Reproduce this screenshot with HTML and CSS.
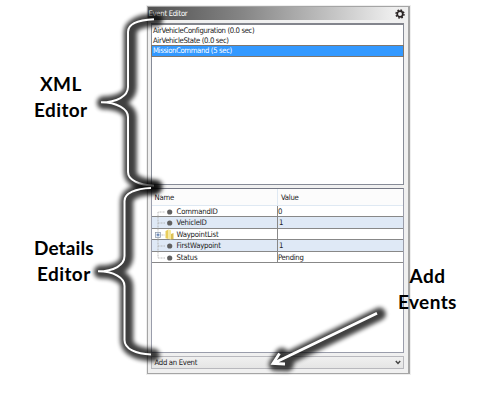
FILE: index.html
```html
<!DOCTYPE html>
<html lang="en">
<head>
<meta charset="utf-8">
<title>Event Editor</title>
<link rel="stylesheet" href="styles.css">
</head>
<body>
<main class="stage">
  <section class="window">
    <header class="titlebar">
      <span>Event Editor</span>
      <svg class="gear" viewBox="0 0 10 10"><circle cx="5" cy="5" r="4" fill="none" stroke="#292323" stroke-width="1.4" stroke-dasharray="1.7 1.44"/><circle cx="5" cy="5" r="2.8" fill="#eee" stroke="#292323" stroke-width="1.7"/></svg>
    </header>
    <ul class="events">
      <li>AirVehicleConfiguration (0.0 sec)</li>
      <li>AirVehicleState (0.0 sec)</li>
      <li class="selected">MissionCommand (5 sec)</li>
    </ul>
    <section class="details">
      <div class="row head"><div class="name">Name</div><div class="value">Value</div></div>
      <div class="row"><div class="name"><svg class="tree" viewBox="0 0 25 11.5"><path class="dots" d="M6 11.5V6H13"/><circle cx="17.7" cy="6" r="2.6"/></svg>CommandID</div><div class="value tight">0</div></div>
      <div class="row alt"><div class="name"><svg class="tree" viewBox="0 0 25 11.5"><path class="dots" d="M6 0V11.5M6 6H13"/><circle cx="17.7" cy="6" r="2.6"/></svg>VehicleID</div><div class="value">1</div></div>
      <div class="row"><div class="name"><svg class="tree" viewBox="0 0 25 11.5"><path class="dots" d="M6 0V11.5M8.5 6H13"/><rect class="box" x="3.5" y="3.4" width="5" height="5"/><path class="plus" d="M4.5 5.9H7.500M6 4.400V7.400"/><path fill="#e9cd5c" d="M13.500 2l3-1.500V10l-3-.8z"/><path fill="#f7e99a" d="M16.500 .5l2.500 .7V10.500L16.500 10z"/><path fill="#dcbf54" d="M19 5l2.500-1V10L19 10.600z"/></svg>WaypointList</div><div class="value"></div></div>
      <div class="row alt"><div class="name"><svg class="tree" viewBox="0 0 25 11.5"><path class="dots" d="M6 0V11.5M6 6H13"/><circle cx="17.7" cy="6" r="2.6"/></svg>FirstWaypoint</div><div class="value">1</div></div>
      <div class="row"><div class="name"><svg class="tree" viewBox="0 0 25 11.5"><path class="dots" d="M6 0V6H13"/><circle cx="17.7" cy="6" r="2.6"/></svg>Status</div><div class="value tight">Pending</div></div>
    </section>
    <div class="combo"><span>Add an Event</span><svg class="chevron" viewBox="0 0 6 5"><path d="M.8 1L3 3.4 5.2 1"/></svg></div>
  </section>
  <svg class="marks" viewBox="0 0 494 402">
    <defs>
      <path id="brace-top" d="M154 19.3C139 20 128 24 128 32V87C128 96 117 102.3 101 102.3C117 102.3 128 109 128 117V172C128 180 139 185 154 185.8"/>
      <path id="brace-bottom" d="M151 188C136 188.5 124.5 193 124.5 201V256C124.5 265 114 271.3 98 271.3C114 271.3 124.5 278 124.5 286V340C124.5 349 136 354 151 354.5"/>
      <path id="arrow" d="M377 313.2L273 363.5M279.5 353.5L273 363.5L285 364"/>
      <filter id="soft" filterUnits="userSpaceOnUse" x="0" y="0" width="494" height="402"><feGaussianBlur stdDeviation="2.2"/></filter>
    </defs>
    <g class="glow" filter="url(#soft)"><use href="#brace-top" x="2.300" y="0.500"/></g><use href="#brace-top" class="stroke"/>
    <g class="glow" filter="url(#soft)"><use href="#brace-bottom" x="2.300" y="0.500"/></g><use href="#brace-bottom" class="stroke"/>
    <g class="glow" filter="url(#soft)"><use href="#arrow" x="2.300" y="0.800"/></g><use href="#arrow" class="stroke thick"/>
  </svg>
  <div class="label xml"><span>XML</span><span>Editor</span></div>
  <div class="label det"><span>Details</span><span>Editor</span></div>
  <div class="label add"><span>Add</span><span>Events</span></div>
</main>
</body>
</html>
```
FILE: styles.css
```css
* { box-sizing: border-box; }
body { margin: 0; background: #fff; }
.stage { position: relative; width: 494px; height: 402px; padding: 6px 0 0 146.5px; overflow: hidden; }
.window {
  width: 263px; height: 367.5px; padding: 0 3.5px 0 3px;
  display: flex; flex-direction: column;
  border: 1.4px solid #a5a5a5; border-right-width: 2px;
  background: #f0f0f0; outline: 1px solid #eee;
  font: 7.7px/10px "DejaVu Sans Condensed", "DejaVu Sans", sans-serif;
  letter-spacing: -.37px; color: #222; white-space: nowrap;
}
.titlebar {
  height: 13px; margin: 0 -2px 3px -3px; padding: 0 1px; flex: none;
  display: flex; align-items: center; justify-content: space-between;
  background: linear-gradient(90deg, #505050, #868686 37%, #eee 95%); color: #fff;
  letter-spacing: -.3px;
}
.gear { width: 10px; height: 10px; }
.events {
  height: 162px; flex: none; margin: 0; padding: .5px 0 0; list-style: none;
  background: #fff; border: 1px solid #868b97; border-top: 2px solid #83858d;
}
.events li { height: 10.2px; line-height: 10.2px; padding-left: 1.5px; }
.events .selected { background: #3399ff; color: #fff; outline: 1px solid #80766c; outline-offset: -.5px; }
.details { height: 165px; flex: none; margin-top: 3px; background: #fff; border: 1px solid #9a9dab; border-top-color: #747784; }
.row { display: grid; grid-template-columns: 125.5px 1fr; height: 11.5px; line-height: 11px; border-bottom: 1px solid #888; }
.head { height: 16.5px; line-height: 17px; background: #fcfcfc; border-bottom-color: #dfe9f3; }
.head .name { padding-left: 3px; }
.head .value { padding-left: 3px; border-left-color: #dfe9f3; }
.alt { background: #dfe9f6; }
.name { display: flex; letter-spacing: -.2px; }
.value { border-left: 1px solid #888; padding-left: 1px; letter-spacing: -.3px; }
.tight { padding-left: 0; }
.tree { width: 25px; height: 11.5px; flex: none; fill: #606060; }
.dots { fill: none; stroke: #aaa; stroke-width: .8; stroke-dasharray: 1 .5; }
.box { fill: #eef2f8; stroke: #8c98a8; stroke-width: .7; }
.plus { stroke: #345a9c; stroke-width: .8; }
.combo {
  height: 13px; flex: none; margin-top: 3px; padding: 0 2px 0 3px;
  display: flex; align-items: center; justify-content: space-between;
  border: 1px solid #b8b8bd; background: linear-gradient(#f0f0f0, #e5e5e5);
  letter-spacing: -.3px;
}
.chevron { width: 6px; height: 5px; fill: none; stroke: #444; stroke-width: 1.5; }
.marks { position: absolute; inset: 0; width: 494px; height: 402px; fill: none; }
.glow { stroke: #000; stroke-width: 13; stroke-linecap: round; stroke-linejoin: round; opacity: .75; }
.stroke { stroke: #fff; stroke-width: 2; }
.thick { stroke-width: 2.8; }
.label {
  position: absolute; display: flex; flex-direction: column; align-items: center;
  font: 700 19px/26.4px Lato, sans-serif; letter-spacing: .4px; color: #000;
}
.xml { left: 34px; top: 71px; }
.det { left: 34px; top: 235px; }
.det span:first-child { letter-spacing: .1px; }
.add { left: 398px; top: 263px; }
```
